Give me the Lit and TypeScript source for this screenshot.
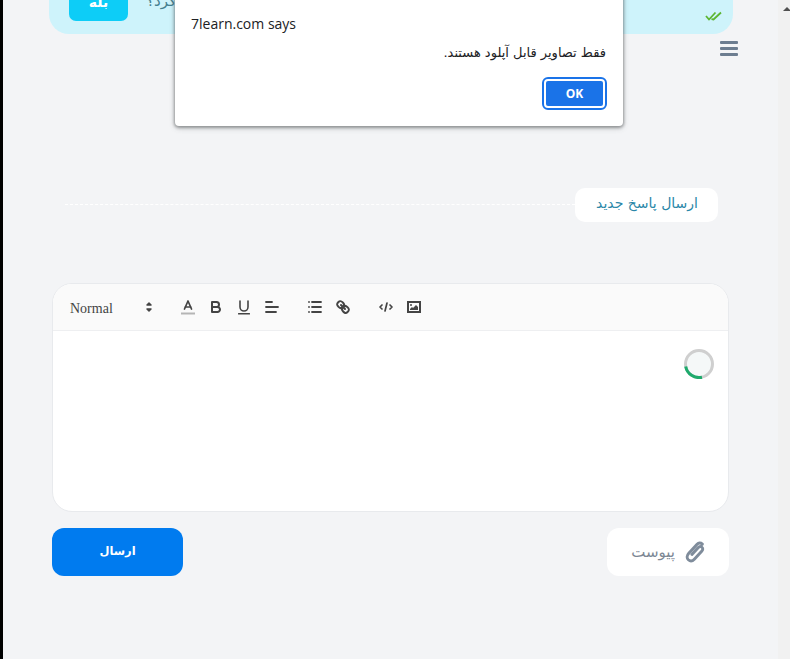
import { LitElement, html, css, svg } from "lit";
import { customElement } from "lit/decorators.js";

const icon = (body: unknown) => html`<svg class="qi" viewBox="0 0 18 18" width="18" height="18">${body}</svg>`;

@customElement("app-root")
export class AppRoot extends LitElement {
  static styles = css`
    :host { display: block; width: 790px; height: 659px; overflow: hidden; position: relative; background: #f3f4f6; font-family: "Open Sans", "DejaVu Sans", sans-serif; }
    .shell { display: flex; height: 659px; }
    .edge { width: 3px; background: #000; flex: none; }
    .main { flex: none; width: 775px; padding: 0 0 0 46px; box-sizing: border-box; }
    .sb { flex: 1; background: #f1f1f1; position: relative; }
    .sb::before { content: ""; position: absolute; left: 5px; top: 7px; border: 4px solid transparent; border-top: 0; border-bottom: 4px solid #505050; }
    .banner { direction: rtl; margin-top: -32px; height: 66px; width: 684px; box-sizing: border-box; background: #cef3fb; border-radius: 0 0 20px 20px; padding: 17px 11px 13px 20px; display: flex; align-items: flex-end; }
    .check { flex: none; }
    .q { margin-right: auto; margin-left: 18px; align-self: flex-start; font: 15px/24px "DejaVu Sans", sans-serif; color: #45808f; margin-top: 4px; }
    .yes { width: 59px; height: 36px; border-radius: 7px; background: #0dcdf7; color: #fff; font: bold 14px/34px "DejaVu Sans", sans-serif; text-align: center; }
    .menu { display: block; margin: 7px 0 0 671px; }
    .title { display: flex; align-items: center; margin: 132px 0 0 16px; width: 653px; }
    .dash { flex: 1; border-top: 1px dashed #fff; margin-bottom: 1px; }
    .pill { direction: rtl; width: 143px; height: 34px; box-sizing: border-box; background: #fff; border-radius: 10px; padding: 0 20px; font: 14px/30px "DejaVu Sans", sans-serif; color: #2a87a8; white-space: nowrap; }
    .editor { margin: 61px 0 0 3px; width: 677px; height: 229px; box-sizing: border-box; background: #fff; border: 1px solid #e8eaed; border-radius: 20px; overflow: hidden; }
    .bar { height: 47px; box-sizing: border-box; background: #fafafa; border-bottom: 1px solid #eeeff1; display: flex; align-items: center; padding-left: 8px; }
    .picker { width: 98px; height: 24px; display: flex; justify-content: space-between; align-items: center; margin-right: 15px; font: 14px "Liberation Serif", serif; color: #444; padding: 0 1px 0 9px; box-sizing: border-box; }
    .label { margin-top: 3px; }
    .group { display: flex; margin-right: 15px; }
    .btn { width: 28px; height: 24px; display: flex; align-items: center; justify-content: center; }
    .qi { display: block; fill: none; stroke: #444; stroke-width: 2; stroke-linecap: round; stroke-linejoin: round; }
    .qi .f { fill: #444; stroke: none; }
    .qi .t { stroke: #b5b5b5; stroke-linecap: square; }
    .qi .arrows { fill: #444; stroke-width: 1.5; }
    .body { display: flex; justify-content: flex-end; padding: 18px 14px 0 0; }
    .spin { display: block; filter: blur(0.4px); }
    .actions { display: flex; justify-content: space-between; margin: 16px 0 0 3px; width: 677px; }
    .send { width: 131px; height: 48px; border-radius: 12px; background: #007bef; color: #fff; font: bold 11.5px/46px "DejaVu Sans", sans-serif; text-align: center; }
    .attach { direction: rtl; width: 122px; height: 48px; box-sizing: border-box; border-radius: 12px; background: #fff; color: #7c8794; font: 15px/46px "DejaVu Sans", sans-serif; display: flex; align-items: center; padding-right: 23px; gap: 10px; }
    .dialog { position: absolute; left: 175px; top: -10px; width: 448px; height: 136px; box-sizing: border-box; background: #fff; border-radius: 0 0 4px 4px; box-shadow: 0 1px 3px 1px rgba(60,64,67,.45), 0 2px 6px rgba(60,64,67,.2); padding: 24px 16px 0; color: #202124; }
    .d-title { font-size: 14px; line-height: 20px; }
    .d-msg { direction: rtl; font: 13px/20px "DejaVu Sans", sans-serif; margin-top: 9px; padding-right: 1px; }
    .d-row { display: flex; justify-content: flex-end; margin-top: 16px; }
    .ok { box-sizing: border-box; width: 61px; height: 29px; margin-right: 2px; border: 2px solid #fff; outline: 2px solid #1a73e8; border-radius: 4px; background: #1a73e8; color: #fff; font-weight: 700; font-size: 12px; line-height: 25px; text-align: center; }
  `;

  render() {
    return html`
      <div class="shell">
        <div class="edge"></div>
        <main class="main">
          <div class="banner">
            <svg class="check" width="17" height="10" viewBox="0 0 17 10" fill="none" stroke="#5cb531" stroke-width="1.8"><path d="M1 5l3 3.500 6.500-7M6.500 8.200l2 .3 7.500-7"/></svg>
            <span class="q">کرد؟</span>
            <div class="yes">بله</div>
          </div>
          <svg class="menu" width="18" height="15" viewBox="0 0 18 15" fill="#6c7d90"><rect y="0" width="18" height="3" rx="1"/><rect y="6" width="18" height="3" rx="1"/><rect y="12" width="18" height="3" rx="1"/></svg>
          <div class="title">
            <div class="dash"></div>
            <div class="pill">ارسال پاسخ جدید</div>
          </div>
          <section class="editor">
            <div class="bar">
              <div class="picker"><span class="label">Normal</span>
                <svg class="qi" viewBox="0 0 18 18" width="18" height="18"><polygon class="arrows" points="7 11 9 13 11 11 7 11"/><polygon class="arrows" points="7 7 9 5 11 7 7 7"/></svg>
              </div>
              <div class="group">
                <div class="btn">${icon(svg`<line class="t" x1="3" x2="15" y1="15.500" y2="15.500"/><polyline stroke-width="1.7" points="5.500 11 9 3 12.500 11"/><line stroke-width="1.7" x1="11.630" x2="6.380" y1="9" y2="9"/>`)}</div>
                <div class="btn">${icon(svg`<path d="M5,4H9.500A2.500,2.500,0,0,1,12,6.500v0A2.500,2.500,0,0,1,9.500,9H5A0,0,0,0,1,5,9V4A0,0,0,0,1,5,4Z"/><path d="M5,9h5.500A2.500,2.500,0,0,1,13,11.500v0A2.500,2.500,0,0,1,10.500,14H5a0,0,0,0,1,0,0V9A0,0,0,0,1,5,9Z"/>`)}</div>
                <div class="btn">${icon(svg`<path stroke-width="1.600" d="M5,3V9a4.012,4.012,0,0,0,4,4H9a4.012,4.012,0,0,0,4-4V3"/><rect class="f" height="1.500" rx="0.500" ry="0.500" width="12" x="3" y="15"/>`)}</div>
                <div class="btn">${icon(svg`<g stroke-width="1.800"><line x1="3" x2="15" y1="9" y2="9"/><line x1="3" x2="13" y1="14" y2="14"/><line x1="3" x2="9" y1="4" y2="4"/></g>`)}</div>
              </div>
              <div class="group">
                <div class="btn">${icon(svg`<g stroke-width="1.800"><line x1="6" x2="15" y1="4" y2="4"/><line x1="6" x2="15" y1="9" y2="9"/><line x1="6" x2="15" y1="14" y2="14"/><line x1="3" x2="3" y1="4" y2="4"/><line x1="3" x2="3" y1="9" y2="9"/><line x1="3" x2="3" y1="14" y2="14"/></g>`)}</div>
                <div class="btn">${icon(svg`<line x1="7" x2="11" y1="7" y2="11"/><path d="M8.900,4.577a3.476,3.476,0,0,1,.36,4.679A3.476,3.476,0,0,1,4.577,8.900C3.185,7.500,2.035,6.400,4.217,4.217S7.500,3.185,8.900,4.577Z"/><path d="M13.423,9.100a3.476,3.476,0,0,0-4.679-.36,3.476,3.476,0,0,0,.36,4.679c1.392,1.392,2.500,2.542,4.679.36S14.815,10.500,13.423,9.100Z"/>`)}</div>
              </div>
              <div class="group">
                <div class="btn">${icon(svg`<g stroke-width="1.700"><polyline points="5 7 3 9 5 11"/><polyline points="13 7 15 9 13 11"/><line x1="10" x2="8" y1="5" y2="13"/></g>`)}</div>
                <div class="btn">${icon(svg`<rect height="10" width="12" x="3" y="4" stroke-linecap="butt" stroke-linejoin="miter"/><circle class="f" cx="6" cy="7" r="1"/><polyline class="f" points="5 12 5 11 7 9 8 10 11 7 13 9 13 12 5 12"/>`)}</div>
              </div>
            </div>
            <div class="body">
              <svg class="spin" width="30" height="30" viewBox="0 0 30 30" fill="#f5f8f8"><circle cx="15" cy="15" r="13.500" stroke="#cfcfcf" stroke-width="3"/><path d="M1.700 17.500A13.500 13.500 0 0 0 18 28.200" fill="none" stroke="#1eaa6c" stroke-width="3"/></svg>
            </div>
          </section>
          <div class="actions">
            <div class="send">ارسال</div>
            <div class="attach">
              <svg width="21" height="24" viewBox="0 0 20 22" fill="none" stroke="#7f8c9b" stroke-width="2.800" stroke-linecap="round"><path d="M16.500 3.500c-1.600-1.500-3.600-1.300-5 .2L3.600 12.200c-2 2.200-2 4.700-.4 6.200 1.700 1.500 3.900 1.300 5.700-.6l7.200-7.700c1.100-1.200 1-2.700 0-3.600-1-.9-2.500-.8-3.600.4L6.600 13.400"/></svg>
              <span>پیوست</span>
            </div>
          </div>
        </main>
        <div class="sb"></div>
      </div>
      <div class="dialog" role="alertdialog">
        <div class="d-title">7learn.com says</div>
        <div class="d-msg">فقط تصاویر قابل آپلود هستند.</div>
        <div class="d-row"><div class="ok">OK</div></div>
      </div>
    `;
  }
}
